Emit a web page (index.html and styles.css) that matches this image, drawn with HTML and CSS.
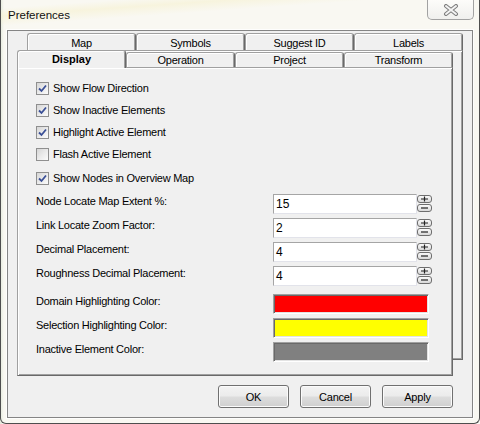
FILE: index.html
```html
<!DOCTYPE html>
<html>
<head>
<meta charset="utf-8">
<title>Preferences</title>
<link rel="stylesheet" href="styles.css">
</head>
<body>
<div class="window">
  <div class="titlebar">
    <span class="title">Preferences</span>
    <div class="close">
      <svg width="16" height="12" viewBox="0 0 16 12">
        <path d="M3 2 L13 10 M13 2 L3 10" stroke="#7d7d7d" stroke-width="4" stroke-linecap="round" fill="none"/>
        <path d="M3 2 L13 10 M13 2 L3 10" stroke="#f4f4f4" stroke-width="2" stroke-linecap="round" fill="none"/>
      </svg>
    </div>
  </div>
  <div class="client">
    <div class="tabctl">
      <div class="layer back">
        <div class="tabrow">
          <div class="tab">Map</div>
          <div class="tab">Symbols</div>
          <div class="tab">Suggest ID</div>
          <div class="tab">Labels</div>
        </div>
        <div class="sheet"></div>
      </div>
      <div class="layer front">
        <div class="tabrow">
          <div class="tab sel">Display</div>
          <div class="tab">Operation</div>
          <div class="tab">Project</div>
          <div class="tab">Transform</div>
        </div>
        <div class="sheet page">
          <div class="check"><span class="box on"><svg width="11" height="11" viewBox="0 0 11 11"><path d="M2 5.5 L4.5 8 L9 2.5" stroke="#3a4f96" stroke-width="1.8" fill="none"/></svg></span>Show Flow Direction</div>
          <div class="check"><span class="box on"><svg width="11" height="11" viewBox="0 0 11 11"><path d="M2 5.5 L4.5 8 L9 2.5" stroke="#3a4f96" stroke-width="1.8" fill="none"/></svg></span>Show Inactive Elements</div>
          <div class="check"><span class="box on"><svg width="11" height="11" viewBox="0 0 11 11"><path d="M2 5.5 L4.5 8 L9 2.5" stroke="#3a4f96" stroke-width="1.8" fill="none"/></svg></span>Highlight Active Element</div>
          <div class="check"><span class="box"></span>Flash Active Element</div>
          <div class="check gap"><span class="box on"><svg width="11" height="11" viewBox="0 0 11 11"><path d="M2 5.5 L4.5 8 L9 2.5" stroke="#3a4f96" stroke-width="1.8" fill="none"/></svg></span>Show Nodes in Overview Map</div>

          <div class="fields">
            <div class="field">
              <span class="lbl">Node Locate Map Extent %:</span>
              <span class="input">15</span>
              <span class="spin"><span class="sb"><svg width="15" height="8" viewBox="0 0 15 8"><path d="M4 4 H11 M7.5 1.5 V6.5" stroke="#222" stroke-width="1.2"/></svg></span><span class="sb"><svg width="15" height="8" viewBox="0 0 15 8"><path d="M4 4 H11" stroke="#222" stroke-width="1.2"/></svg></span></span>
            </div>
            <div class="field">
              <span class="lbl">Link Locate Zoom Factor:</span>
              <span class="input">2</span>
              <span class="spin"><span class="sb"><svg width="15" height="8" viewBox="0 0 15 8"><path d="M4 4 H11 M7.5 1.5 V6.5" stroke="#222" stroke-width="1.2"/></svg></span><span class="sb"><svg width="15" height="8" viewBox="0 0 15 8"><path d="M4 4 H11" stroke="#222" stroke-width="1.2"/></svg></span></span>
            </div>
            <div class="field">
              <span class="lbl">Decimal Placement:</span>
              <span class="input">4</span>
              <span class="spin"><span class="sb"><svg width="15" height="8" viewBox="0 0 15 8"><path d="M4 4 H11 M7.5 1.5 V6.5" stroke="#222" stroke-width="1.2"/></svg></span><span class="sb"><svg width="15" height="8" viewBox="0 0 15 8"><path d="M4 4 H11" stroke="#222" stroke-width="1.2"/></svg></span></span>
            </div>
            <div class="field">
              <span class="lbl">Roughness Decimal Placement:</span>
              <span class="input">4</span>
              <span class="spin"><span class="sb"><svg width="15" height="8" viewBox="0 0 15 8"><path d="M4 4 H11 M7.5 1.5 V6.5" stroke="#222" stroke-width="1.2"/></svg></span><span class="sb"><svg width="15" height="8" viewBox="0 0 15 8"><path d="M4 4 H11" stroke="#222" stroke-width="1.2"/></svg></span></span>
            </div>
            <div class="field colorrow first">
              <span class="lbl">Domain Highlighting Color:</span>
              <span class="swatch red"></span>
            </div>
            <div class="field colorrow">
              <span class="lbl">Selection Highlighting Color:</span>
              <span class="swatch yellow"></span>
            </div>
            <div class="field colorrow">
              <span class="lbl">Inactive Element Color:</span>
              <span class="swatch gray"></span>
            </div>
          </div>
        </div>
      </div>
    </div>
    <div class="buttons">
      <button class="btn">OK</button>
      <button class="btn">Cancel</button>
      <button class="btn">Apply</button>
    </div>
  </div>
</div>
</body>
</html>
```

FILE: styles.css
```css
* { box-sizing: border-box; }
html, body { margin: 0; padding: 0; }
body {
  width: 480px;
  height: 424px;
  overflow: hidden;
  background-color: #f9f8f2;
  background-image:
    linear-gradient(176deg, rgba(255,255,255,0) 0px, rgba(255,255,255,0) 8px, rgba(246,241,208,0.6) 16px, rgba(255,255,255,0) 26px),
    linear-gradient(90deg, rgba(205,218,196,0.5) 0px, rgba(255,255,255,0) 4px);
  font-family: "Liberation Sans", Arial, sans-serif;
  font-size: 11px;
  color: #000;
}
.window {
  width: 480px;
  height: 424px;
  border: 1px solid #4e4e4e;
  border-top: 0;
  border-radius: 0 0 6px 6px;
  display: flex;
  flex-direction: column;
}
.titlebar {
  height: 30px;
  flex: none;
  display: flex;
  justify-content: space-between;
  align-items: flex-start;
  padding: 0 5px 0 7px;
}
.title {
  padding-top: 8px;
  font-size: 11.5px;
  line-height: 14px;
  color: #111;
}
.close {
  width: 47px;
  height: 20px;
  border: 1px solid #a2a2a2;
  border-top: 0;
  border-radius: 0 0 5px 5px;
  background: linear-gradient(rgba(255,255,255,0.6), rgba(236,236,236,0.7));
  display: flex;
  align-items: center;
  justify-content: center;
  padding-top: 1px;
}
.client {
  flex: none;
  height: 388px;
  margin: 0 6px;
  background: #f0f0f0;
  border: 1px solid #858585;
  box-shadow: 0 0 0 1px rgba(255,255,255,0.8);
  padding: 2px 0 0 9px;
  letter-spacing: -0.25px;
}
.tabctl {
  display: grid;
}
.layer {
  grid-area: 1 / 1;
  width: 436px;
  display: flex;
  flex-direction: column;
  align-self: start;
  justify-self: start;
}
.back { margin-left: 10px; height: 327px; }
.front { margin-top: 17px; height: 326px; }
.tabrow {
  display: flex;
  height: 17px;
  flex: none;
}
.tab {
  width: 109px;
  height: 17px;
  border: 1px solid #a0a0a0;
  border-bottom: 0;
  border-right-color: #696969;
  border-radius: 3px 3px 0 0;
  background: #f0f0f0;
  box-shadow: inset 1px 1px #ffffff, inset -1px 0 #a0a0a0;
  text-align: center;
  line-height: 16px;
  padding-top: 1px;
}
.front .tab {
  margin-top: 2px;
  height: 15px;
  line-height: 14px;
  padding-top: 0;
}
.front .tab.sel {
  margin-top: 0;
  height: 18px;
  line-height: 16px;
  z-index: 1;
  font-weight: bold;
  letter-spacing: 0;
}
.sheet {
  flex: 1;
  background: #f0f0f0;
  border: 1px solid #a0a0a0;
  border-right-color: #696969;
  border-bottom-color: #696969;
  box-shadow: inset 1px 1px #ffffff, inset -1px -1px #a0a0a0;
}
.page {
  padding: 9px 0 0 18px;
}
.check {
  display: flex;
  align-items: center;
  height: 22px;
}
.check.gap { margin-top: 2px; }
.box {
  width: 13px;
  height: 13px;
  margin-right: 4px;
  border: 1px solid #8f8f8f;
  background: linear-gradient(135deg, #d6d6d6 0%, #ececec 55%, #fbfbfb 100%);
  display: flex;
  align-items: center;
  justify-content: center;
}
.box svg { display: block; }
.fields { margin-top: 3px; }
.field {
  display: flex;
  height: 24px;
}
.lbl {
  width: 237px;
  padding-top: 2px;
  line-height: 14px;
}
.input {
  align-self: center;
  width: 144px;
  height: 20px;
  background: #fff;
  border: 1px solid #a5a5a5;
  border-right-color: #e2e3ea;
  border-bottom-color: #e2e3ea;
  font-size: 12px;
  line-height: 18px;
  padding-left: 2px;
  letter-spacing: 0;
}
.spin {
  align-self: center;
  height: 20px;
  display: flex;
  flex-direction: column;
  gap: 1px;
  padding-top: 1px;
}
.sb {
  width: 15px;
  height: 8px;
  border: 1px solid #6e6e6e;
  border-radius: 3px;
  background: linear-gradient(#fafafa, #d9d9d9);
  display: flex;
  align-items: center;
  justify-content: center;
}
.sb svg { display: block; flex: none; }
.colorrow.first { margin-top: 4px; }
.swatch {
  align-self: center;
  width: 156px;
  height: 20px;
  border: 1px solid #a0a0a0;
  border-right-color: #ffffff;
  border-bottom-color: #ffffff;
  box-shadow: inset 1px 1px #696969, inset -1px -1px #e3e3e3;
}
.red { background: #ff0000; }
.yellow { background: #ffff00; }
.gray { background: #808080; }
.buttons {
  display: flex;
  justify-content: flex-end;
  gap: 11px;
  margin-top: 9px;
  padding-right: 19px;
}
.btn {
  width: 71px;
  height: 23px;
  margin: 0;
  padding: 0;
  border: 1px solid #707070;
  border-radius: 3px;
  background: linear-gradient(#f3f3f3 0%, #ebebeb 48%, #dddddd 52%, #cfcfcf 100%);
  box-shadow: inset 0 0 0 1px #fbfbfb;
  font-family: "Liberation Sans", Arial, sans-serif;
  font-size: 11px;
  letter-spacing: -0.2px;
  color: #000;
}
```
